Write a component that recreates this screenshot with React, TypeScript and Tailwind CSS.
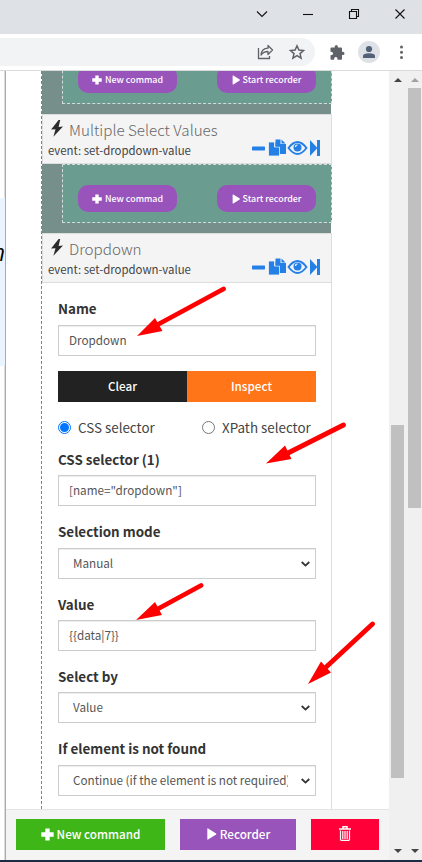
import React from "react";

const Plus = ({ className }: { className: string }) => (
  <svg viewBox="0 0 12 12" className={className} fill="currentColor">
    <path d="M4 .5h4V4h3.700v4H8v3.500H4V8H.3V4H4z" />
  </svg>
);

const Play = ({ className }: { className: string }) => (
  <svg viewBox="0 0 10 12" className={className} fill="currentColor">
    <path d="M.8.8Q.8 0 1.600.5l8 5q.7.5 0 1l-8 5Q.8 12 .8 11z" />
  </svg>
);

const Bolt = () => (
  <svg viewBox="0 0 12 17" className="h-[17px] w-3 shrink-0" fill="#2b2b2b">
    <path d="M7.600 0 .1 9.600l4.400-.4L2.400 16.800 12 6.600l-4.400.5L9.200.1z" />
  </svg>
);

function PillRow() {
  return (
    <div className="ml-5 flex h-[59px] w-[270px] shrink-0 justify-between border border-dashed border-[#d5dcda] bg-[#6a9c90] pt-5 pr-[15px] pl-[15px]">
      <div className="flex h-[27px] w-[99px] items-center justify-center rounded-[10px] bg-[#9954bb] text-[8.9px] font-medium text-white">
        <Plus className="mr-[3px] h-[10px] w-[10px]" />
        <span className="whitespace-nowrap">New commad</span>
      </div>
      <div className="flex h-[27px] w-[99px] items-center justify-center rounded-[10px] bg-[#9954bb] text-[8.9px] font-medium text-white">
        <Play className="mr-[3px] h-[10px] w-2" />
        <span className="whitespace-nowrap">Start recorder</span>
      </div>
    </div>
  );
}

function CommandHeader({ title }: { title: string }) {
  return (
    <div className="h-[50px] w-[290px] border border-[#ddd] bg-[#f4f4f4] pl-[5px]">
      <div className="flex h-[26px] items-center pt-[1px] pl-[3px]">
        <Bolt />
        <span className="ml-[6px] text-[15.2px] leading-[22px] font-light whitespace-nowrap text-[#666]">{title}</span>
      </div>
      <div className="flex h-[18px] items-start justify-between pr-[10px]">
        <span className="text-[11.4px] leading-[18px] whitespace-nowrap text-[#444]">event: set-dropdown-value</span>
        <svg viewBox="0 0 70 18" className="-mt-[2px] h-[18px] w-[70px]" fill="#2480e6">
          <rect x="1" y="7.500" width="13" height="4" rx=".7" />
          <path d="M24.500.500h5v4.500h5.500v10H24.500zM30.500.500l4 4h-4z" />
          <path d="M17.500 3H23.500v5h5v9H17.500z" stroke="#f4f4f4" strokeWidth=".8" />
          <path d="M24.500 3.500 28.500 7.500h-4z" />
          <path d="M37.500 9q9-12 18 0-9 12-18 0z" fill="none" stroke="#2480e6" strokeWidth="1.900" />
          <circle cx="46.500" cy="8.500" r="4" />
          <path d="M44.500 8q0-2 2-2" fill="none" stroke="#f4f4f4" strokeWidth="1.200" />
          <path d="M59 1 66 8.500V1h3v16h-3V9.500L59 17z" />
        </svg>
      </div>
    </div>
  );
}

function Label({ children }: { children: React.ReactNode }) {
  return <div className="h-5 text-[13.4px] leading-[19px] font-bold whitespace-nowrap text-[#333]">{children}</div>;
}

function Input({ children }: { children: React.ReactNode }) {
  return (
    <div className="flex h-[31px] items-center border border-[#ccc] bg-white pb-px pl-[10px] text-[11.7px] text-[#555] shadow-[inset_0_1px_1px_rgba(0,0,0,0.075)]">
      <span className="whitespace-nowrap">{children}</span>
    </div>
  );
}

function Select({ children }: { children: React.ReactNode }) {
  return (
    <div className="flex h-[31px] items-center justify-between border border-[#ccc] bg-white pr-[5px] pl-[14px] text-[11.7px] text-[#555] shadow-[inset_0_1px_1px_rgba(0,0,0,0.075)]">
      <span className="w-[215px] overflow-hidden pb-px whitespace-nowrap">{children}</span>
      <svg viewBox="0 0 10 6" className="h-[6px] w-[9px]" fill="none" stroke="#333" strokeWidth="2">
        <path d="m.8.8 4.200 4 4.200-4" />
      </svg>
    </div>
  );
}

function BrowserBar() {
  return (
    <>
      <div className="h-[34px] bg-[#dee1e6]">
        <svg viewBox="0 0 422 34" className="h-[34px] w-[422px]" fill="none" stroke="#111" strokeWidth="1.100">
          <path d="m257 11.500 5 5 5-5" />
          <path d="M303 14.500h10" />
          <path d="M349.500 11.500h7v7h-7zM351.500 11.500v-2h7v7h-2" />
          <path d="m395.500 9.500 9 9m0-9-9 9" />
        </svg>
      </div>
      <div className="flex h-[37px] border-b border-[#dadada] bg-white pt-1">
        <div className="flex h-7 w-[315px] items-center justify-end rounded-r-[14px] bg-[#f1f3f4]">
          <svg viewBox="0 0 60 28" className="h-7 w-[60px]" fill="none" stroke="#5f6368" strokeWidth="1.300">
            <path d="M3.500 10v10.500h11V18" />
            <path d="M6 17q.5-6.500 7-6.800V7.500l4.500 4.500-4.500 4.500v-3Q8.500 13.500 6 17z" strokeLinejoin="round" />
            <path d="m42 7.800 1.900 4.300 4.600.4-3.500 3.100 1.100 4.600-4.100-2.500-4.100 2.500 1.100-4.600-3.500-3.100 4.600-.4z" strokeWidth="1.500" />
          </svg>
        </div>
        <svg viewBox="0 0 107 32" className="h-8 w-[107px]" fill="#5f6368">
          <path d="M16.500 9.500h3.200q-.4-2.500 1.600-2.500t1.600 2.500H26q1 0 1 1v3.300q2.500-.4 2.500 1.600T27 17v3.700q0 1-1 1h-3.500q.2-2.700-1.700-2.700t-1.700 2.700h-2.600q-1 0-1-1v-3.500q2.600.1 2.600-1.700t-2.600-1.700v-3.300q0-1 1-1z" />
          <circle cx="54" cy="14" r="11" fill="#dee1e6" />
          <circle cx="54" cy="11" r="3.100" fill="#526078" />
          <path d="M48 20v-2q0-2.800 6-2.800t6 2.800v2z" fill="#526078" />
          <circle cx="86.500" cy="9" r="1.500" />
          <circle cx="86.500" cy="14.300" r="1.500" />
          <circle cx="86.500" cy="19.600" r="1.500" />
        </svg>
      </div>
    </>
  );
}

function CommandForm() {
  return (
    <div className="h-[526px] w-[290px] border-r border-l border-r-[#ddd] border-l-transparent bg-white px-[15px] pt-4">
      <Label>Name</Label>
      <div className="mt-[6px]"><Input>Dropdown</Input></div>
      <div className="mt-[15px] grid h-[31px] grid-cols-2 text-center text-[11.7px] leading-[30px] font-medium text-white">
        <div className="bg-[#222]">Clear</div>
        <div className="bg-[#ff7518]">Inspect</div>
      </div>
      <div className="mt-[13px] flex h-6 items-center text-[13.4px] text-[#444]">
        <div className="flex w-[144px] items-center gap-[7px]">
          <span className="flex h-[13px] w-[13px] items-center justify-center rounded-full border border-[#0075ff]">
            <span className="h-[9px] w-[9px] rounded-full bg-[#0075ff]" />
          </span>
          <span className="leading-5 whitespace-nowrap">CSS selector</span>
        </div>
        <div className="flex items-center gap-[7px]">
          <span className="h-[13px] w-[13px] rounded-full border border-[#767676]" />
          <span className="leading-5 whitespace-nowrap">XPath selector</span>
        </div>
      </div>
      <div className="mt-[11px]"><Label>CSS selector (1)</Label></div>
      <div className="mt-[5px]"><Input>[name="dropdown"]</Input></div>
      <div className="mt-4"><Label>Selection mode</Label></div>
      <div className="mt-[6px]"><Select>Manual</Select></div>
      <div className="mt-4"><Label>Value</Label></div>
      <div className="mt-[5px]"><Input>{"{{data|7}}"}</Input></div>
      <div className="mt-4"><Label>Select by</Label></div>
      <div className="mt-[5px]"><Select>Value</Select></div>
      <div className="mt-4"><Label>If element is not found</Label></div>
      <div className="mt-[6px]"><Select>Continue (if the element is not required)</Select></div>
    </div>
  );
}

function Scrollbars() {
  return (
    <div className="flex w-[33px] bg-[#f0f0f0] pl-[2px]">
      <div className="flex w-[13px] flex-col items-center">
        <div className="mt-[7px] h-0 w-0 border-x-4 border-b-4 border-x-transparent border-b-[#444]" />
        <div className="mt-[343px] h-[353px] w-[13px] bg-[#c0c0c0]" />
        <div className="mt-[71px] h-0 w-0 border-x-4 border-t-4 border-x-transparent border-t-[#444]" />
      </div>
      <div className="ml-1 flex w-[13px] flex-col items-center">
        <div className="mt-[7px] h-0 w-0 border-x-4 border-b-4 border-x-transparent border-b-[#a0a0a0]" />
        <div className="mt-[6px] h-[420px] w-[13px] bg-[#c0c0c0]" />
        <div className="mt-[341px] h-0 w-0 border-x-4 border-t-4 border-x-transparent border-t-[#444]" />
      </div>
    </div>
  );
}

function Arrows() {
  return (
    <svg viewBox="0 0 422 862" className="pointer-events-none absolute top-0 left-0 h-[862px] w-[422px]" fill="#f00" stroke="#f00" strokeLinecap="round">
      <path d="M223.500 289 156 325.500M343.500 425 286 454M201 585.500 154 611M372.500 624 324 669" strokeWidth="4.800" />
      <path d="m137 336 18-18 7.500 13zM266 463.500l19-18 6.500 13.500zM136 620l19-18 7 13zM308 684l13-22.500 10 11z" stroke="none" />
    </svg>
  );
}

export default function App() {
  return (
    <div className="relative h-[862px] w-[422px] overflow-hidden bg-white font-['Noto_Sans_CJK_SC','Noto_Sans',sans-serif]">
      <BrowserBar />
      <div className="flex h-[789px]">
        <div className="w-[6px] overflow-hidden border-r border-[#aaa] bg-white pt-[127px] shadow-[inset_-1px_0_#ddd]">
          <div className="flex h-[168px] w-[5px] justify-end overflow-hidden bg-[#eaf4fe] pt-[34px]">
            <span className="font-['Open_Sans',sans-serif] text-[23px] leading-[40px] text-black italic">m</span>
          </div>
        </div>
        <div className="w-[383px]">
          <div className="h-[738px] overflow-hidden pl-[35px]">
            <div className="border-l border-dashed border-[#6f8983]">
              <div className="flex h-[43px] w-[289px] items-end bg-[#768f8a] pb-[10px]">
                <PillRow />
              </div>
              <CommandHeader title="Multiple Select Values" />
              <div className="h-[69px] w-[289px] bg-[#768f8a]">
                <PillRow />
              </div>
              <CommandHeader title="Dropdown" />
              <CommandForm />
            </div>
          </div>
          <div className="flex h-[51px] border-t border-[#e4e4e4] bg-[#f4f4f4] pt-[9px] pl-[10px] text-[11.7px] font-medium text-white">
            <div className="flex h-[31px] w-[149px] items-center justify-center bg-[#3fb618] pb-px">
              <Plus className="mr-[3px] h-[13px] w-[13px]" />
              <span className="whitespace-nowrap">New command</span>
            </div>
            <div className="ml-[15px] flex h-[31px] w-[116px] items-center justify-center bg-[#9954bb] pb-px">
              <Play className="mr-[3px] h-3 w-[11px]" />
              <span>Recorder</span>
            </div>
            <div className="ml-[15px] flex h-[31px] w-[68px] items-center justify-center bg-[#ff0039]">
              <svg viewBox="0 0 12 15" className="mb-[3px] h-[15px] w-3" fill="none" stroke="#fff">
                <path d="M0 3h12M4 2.500V.8h4v1.700" strokeWidth="1.500" />
                <path d="M1.500 4.500v9q0 .8.800.8h7.400q.8 0 .8-.8v-9M3.800 5v8M6 5v8M8.200 5v8" strokeWidth="1.200" />
              </svg>
            </div>
          </div>
        </div>
        <Scrollbars />
      </div>
      <div className="h-[2px] bg-[#1b2b44]" />
      <Arrows />
    </div>
  );
}
